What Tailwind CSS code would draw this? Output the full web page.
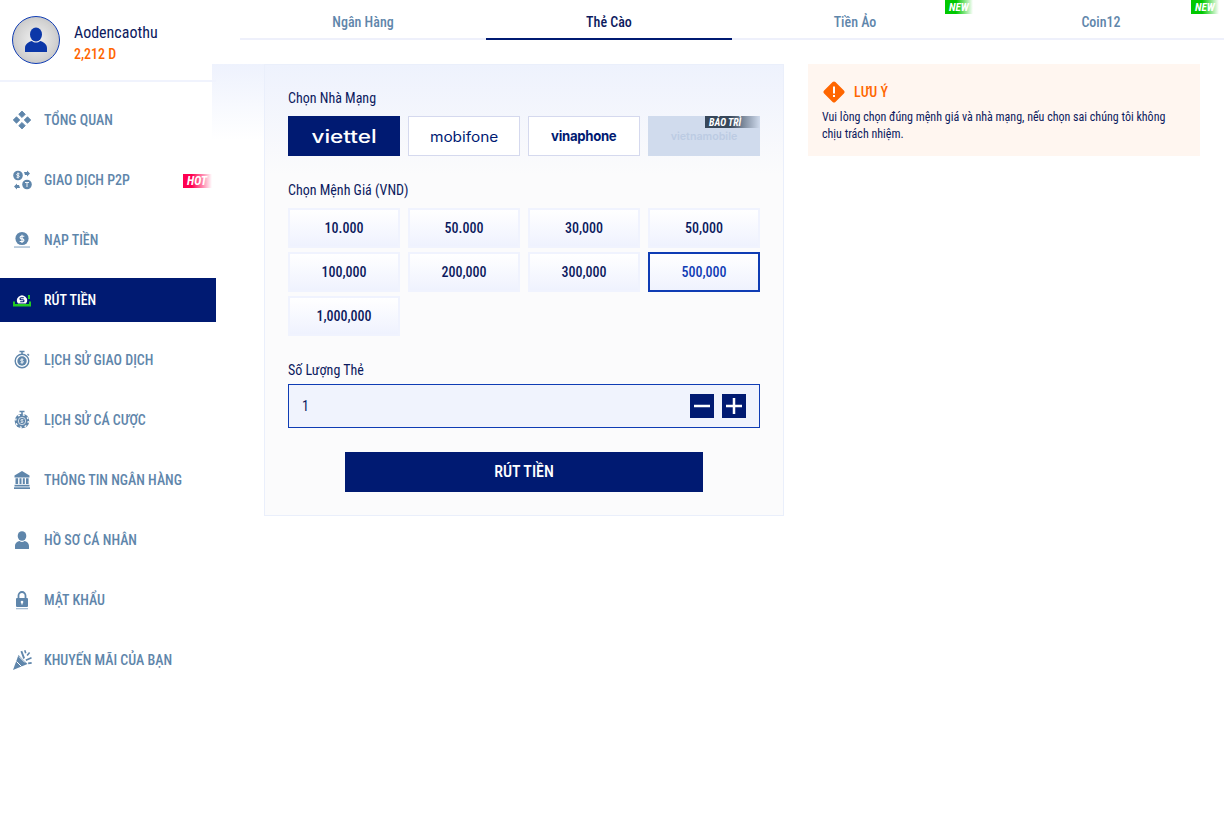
<!doctype html>
<html><head><meta charset="utf-8"><script src="https://cdn.jsdelivr.net/npm/@tailwindcss/browser@4"></script></head>
<body class="bg-white">
<div class="flex h-[820px] w-[1224px] overflow-hidden font-['Roboto','Liberation_Sans',sans-serif] [font-stretch:75%] text-[#0c1a5e]">

<aside class="relative z-10 w-[216px] shrink-0">
  <div class="flex h-[82px] items-start gap-[14px] border-b-2 border-[#f0f3fd] pl-3 pt-4">
    <div class="flex h-12 w-12 items-center justify-center rounded-full border border-[#0f3cb4] bg-[radial-gradient(circle,#f2f2f2_0%,#d2d2d2_60%,#b4b4b4_100%)]">
      <svg width="24" height="26" viewBox="0 0 24 26" fill="#0b37a8"><ellipse cx="12" cy="7.500" rx="6" ry="7"/><path d="M1 25v-4c0-4 4-6.500 7-7 2 2 6 2 8 0 3 .5 7 3 7 7v4z"/></svg>
    </div>
    <div class="pt-[5px]">
      <div class="text-[16px] leading-[24px]">Aodencaothu</div>
      <div class="text-[14px] font-medium leading-[19px] text-[#ff6600]">2,212 D</div>
    </div>
  </div>
  <nav class="flex flex-col gap-4 pt-4 text-[14px] font-medium text-[#5f86ab]">
    <a class="flex h-11 items-center gap-[10px] pl-[10px]"><svg class="h-6 w-6" viewBox="0 0 24 24" fill="#5f86ab" stroke="#5f86ab" stroke-width=".8" stroke-linejoin="round"><path d="M12 3l3.300 3.300L12 9.600 8.700 6.300zM6.500 8.700l3.300 3.300-3.300 3.300L3.200 12zM17.500 8.700l3.300 3.300-3.300 3.300-3.300-3.300zM12 14.400l3.300 3.300-3.300 3.300-3.300-3.300z"/></svg><span>TỔNG QUAN</span></a>
    <a class="relative flex h-11 items-center gap-[10px] pl-[10px]"><svg class="h-6 w-6" viewBox="0 0 24 24" fill="#5f86ab"><circle cx="8" cy="7.500" r="4.800"/><circle cx="17" cy="16.500" r="4.800"/><path d="M14 4l3 0 0-1.500 3 3-3 3 0-1.500-2 0zM10 20l-3 0 0 1.500-3-3 3-3 0 1.500 2 0z"/><path d="M8 4.500v6M9.500 5.800H7.300a1 1 0 0 0 0 1.700h1.400a1 1 0 0 1 0 1.700H6.500M15 14.500h4M17 14.500v4.500" fill="none" stroke="#fff" stroke-width=".9"/></svg><span>GIAO DỊCH P2P</span><span class="absolute right-1 top-[16px] flex h-[14px] w-[29px] items-center bg-[linear-gradient(90deg,#ff0050_30%,#ff005000_100%)] pl-1 text-[12px] font-bold italic leading-none text-white">HOT</span></a>
    <a class="flex h-11 items-center gap-[10px] pl-[10px]"><svg class="h-6 w-6" viewBox="0 0 24 24"><circle cx="12" cy="10.500" r="6.600" fill="#5f86ab"/><path d="M14.300 8.300H11a1.400 1.400 0 0 0 0 2.600h2a1.400 1.400 0 0 1 0 2.600H9.700M12 6.800v8.200" fill="none" stroke="#fff" stroke-width="1.100"/><rect x="4" y="18.300" width="16" height="1.500" fill="#a9bfd4"/></svg><span>NẠP TIỀN</span></a>
    <a class="flex h-11 items-center gap-[10px] bg-[#001a72] pl-[10px] text-white"><svg class="h-6 w-6" viewBox="0 0 24 24"><path d="M3 13.500h2V16h14v-2.500h2V18.500H3z" fill="#22cc22"/><path d="M8 15.500a5 5 0 1 1 8 0z" fill="#fff"/><path d="M13.800 9.800h-2.800a1 1 0 0 0 0 2h2a1 1 0 0 1 0 2h-2.800" fill="none" stroke="#001a72" stroke-width="1.100"/><rect x="18" y="7" width="2" height="4" fill="#22cc22"/></svg><span>RÚT TIỀN</span></a>
    <a class="flex h-11 items-center gap-[10px] pl-[10px]"><svg class="h-6 w-6" viewBox="0 0 24 24" fill="none"><circle cx="12" cy="13" r="6.800" stroke="#5f86ab" stroke-width="1.400"/><circle cx="12" cy="13" r="4.700" fill="#5f86ab"/><path d="M13.500 11.300H11.200a.9.900 0 0 0 0 1.700h1.600a.9.900 0 0 1 0 1.700h-2.300M12 10.200v5.600" stroke="#fff" stroke-width=".8"/><path d="M9.500 3.500h5M12 3.500v3M17.500 6l1.500 1.500" stroke="#5f86ab" stroke-width="1.500"/></svg><span>LỊCH SỬ GIAO DỊCH</span></a>
    <a class="flex h-11 items-center gap-[10px] pl-[10px]"><svg class="h-6 w-6" viewBox="0 0 24 24" fill="none"><circle cx="12" cy="13" r="7.300" fill="#5f86ab"/><circle cx="12" cy="13" r="6.300" stroke="#fff" stroke-width="1.300" stroke-dasharray="2 2.950"/><circle cx="12" cy="13" r="3.700" stroke="#fff" stroke-width=".7"/><path d="M13.300 11.600h-2a.8.800 0 0 0 0 1.400h1.400a.8.800 0 0 1 0 1.400h-2" stroke="#fff" stroke-width=".8"/><path d="M9.500 3.500h5M12 3.500v3" stroke="#5f86ab" stroke-width="1.500"/></svg><span>LỊCH SỬ CÁ CƯỢC</span></a>
    <a class="flex h-11 items-center gap-[10px] pl-[10px]"><svg class="h-6 w-6" viewBox="0 0 24 24" fill="#5f86ab"><path d="M12 3l7.500 4.500V9.500h-15V7.500z"/><path d="M5.500 10.300h2.600v5.700H5.500zM9.500 10.300h2v5.700h-2zM12.800 10.300h2v5.700h-2zM16 10.300h2.600v5.700H16z"/><rect x="4.500" y="16.800" width="15" height="1.700"/><rect x="4" y="19.300" width="16" height="1.700"/></svg><span>THÔNG TIN NGÂN HÀNG</span></a>
    <a class="flex h-11 items-center gap-[10px] pl-[10px]"><svg class="h-6 w-6" viewBox="0 0 24 24" fill="#5f86ab"><ellipse cx="12" cy="8" rx="4.300" ry="4.800"/><path d="M5 20.500v-2.500c0-3 2.500-4.500 4.500-5 1.500 1.200 3.500 1.200 5 0 2 .5 4.500 2 4.500 5v2.500a.5.500 0 0 1-.5.500h-13a.5.500 0 0 1-.5-.5z"/></svg><span>HỒ SƠ CÁ NHÂN</span></a>
    <a class="flex h-11 items-center gap-[10px] pl-[10px]"><svg class="h-6 w-6" viewBox="0 0 24 24" fill="none"><rect x="6" y="10" width="12" height="9" rx="1" fill="#5f86ab"/><path d="M8.500 10V7.500a3.500 3.500 0 0 1 7 0V10" stroke="#5f86ab" stroke-width="1.800"/><circle cx="12" cy="14" r="1.300" fill="#fff"/><rect x="11.400" y="14" width="1.200" height="2.500" fill="#fff"/><rect x="6" y="20" width="12" height="1.300" fill="#a9bfd4"/></svg><span>MẬT KHẨU</span></a>
    <a class="flex h-11 items-center gap-[10px] pl-[10px]"><svg class="h-6 w-6" viewBox="0 0 24 24" fill="#5f86ab"><path d="M3 22l5.500-15 9 9z"/><path d="M6.500 13.500l5 5M9 8.500l6 6" stroke="#fff" stroke-width="1" fill="none"/><path d="M10.500 3.500l1.700-.7 2.800 7.200-1.700.9zM14 2.500l1.500-.5 1 3-1.500.5zM16.500 7l2.500-3 1.200 1-2.500 3zM15.500 11.500l5.700-2.500.6 1.600-5.600 2.400zM18 14.500l3.500-.5.300 1.700-3.500.5z"/></svg><span>KHUYẾN MÃI CỦA BẠN</span></a>
  </nav>
</aside>

<main class="-ml-1 w-[1012px] shrink-0">
  <div class="ml-7 flex h-10 border-b-2 border-[#eef0fb] text-[14px] font-medium text-[#5f86ab]">
    <a class="flex h-10 w-[246px] items-center justify-center pt-1">Ngân Hàng</a>
    <a class="flex h-10 w-[246px] items-center justify-center border-b-2 border-[#001a72] pt-[6px] text-[#0c1a5e]">Thẻ Cào</a>
    <a class="relative flex h-10 w-[246px] items-center justify-center pt-1">Tiền Ảo<span class="absolute right-[5px] top-0 flex h-[14px] w-[28px] items-center bg-[linear-gradient(90deg,#00c800_40%,#00c80000_100%)] pl-1 text-[11px] font-bold italic leading-none text-white">NEW</span></a>
    <a class="relative flex h-10 w-[246px] items-center justify-center pt-1">Coin12<span class="absolute right-[5px] top-0 flex h-[14px] w-[28px] items-center bg-[linear-gradient(90deg,#00c800_40%,#00c80000_100%)] pl-1 text-[11px] font-bold italic leading-none text-white">NEW</span></a>
  </div>

  <div class="flex items-start pt-6">
    <div class="h-[76px] w-[52px] shrink-0 bg-[linear-gradient(180deg,#eef2fd_0%,#ffffff_100%)]"></div>
    <section class="w-[520px] border border-[#eaeffb] bg-[linear-gradient(180deg,#eef2fd_0px,#fbfbfc_110px)] px-[23px] pb-[23px] pt-[23px] text-[14px]">
      <div class="mb-2 leading-5">Chọn Nhà Mạng</div>
      <div class="grid grid-cols-4 gap-2 font-['Inter',sans-serif] [font-stretch:100%]">
        <div class="flex h-10 items-center justify-center bg-[#001a72] text-[18px] font-medium text-white"><span class="inline-block scale-x-[1.25]">viettel</span></div>
        <div class="flex h-10 items-center justify-center border border-[#d5d9ee] bg-white text-[14px] font-normal text-[#001a72]"><span class="inline-block scale-x-[1.1]">mobifone</span></div>
        <div class="flex h-10 items-center justify-center border border-[#d5d9ee] bg-white pb-[2px] text-[14px] font-bold tracking-[-0.3px] text-[#001a72]"><span class="inline-block scale-x-[.94]">vinaphone</span></div>
        <div class="relative flex h-10 items-center justify-center bg-[#d0dbed] pt-[2px] text-[10.700px] font-semibold text-[#bccbe3]">vietnamobile<span class="absolute right-0 top-0 flex h-3 w-[55px] items-center bg-[linear-gradient(90deg,#37475a_45%,#37475a00_100%)] pl-1 pt-px font-['Roboto',sans-serif] text-[10px] font-bold italic leading-none text-white [font-stretch:75%]">BẢO TRÌ</span></div>
      </div>

      <div class="mb-2 mt-6 leading-5">Chọn Mệnh Giá (VND)</div>
      <div class="grid grid-cols-4 gap-x-2 gap-y-1 font-medium">
        <div class="flex h-10 items-center justify-center border-2 border-[#f0f3fe] bg-[linear-gradient(180deg,#ffffff,#eff2fe)]">10.000</div>
        <div class="flex h-10 items-center justify-center border-2 border-[#f0f3fe] bg-[linear-gradient(180deg,#ffffff,#eff2fe)]">50.000</div>
        <div class="flex h-10 items-center justify-center border-2 border-[#f0f3fe] bg-[linear-gradient(180deg,#ffffff,#eff2fe)]">30,000</div>
        <div class="flex h-10 items-center justify-center border-2 border-[#f0f3fe] bg-[linear-gradient(180deg,#ffffff,#eff2fe)]">50,000</div>
        <div class="flex h-10 items-center justify-center border-2 border-[#f0f3fe] bg-[linear-gradient(180deg,#ffffff,#eff2fe)]">100,000</div>
        <div class="flex h-10 items-center justify-center border-2 border-[#f0f3fe] bg-[linear-gradient(180deg,#ffffff,#eff2fe)]">200,000</div>
        <div class="flex h-10 items-center justify-center border-2 border-[#f0f3fe] bg-[linear-gradient(180deg,#ffffff,#eff2fe)]">300,000</div>
        <div class="flex h-10 items-center justify-center border-2 border-[#0f3cb4] bg-[linear-gradient(180deg,#ffffff,#eff2fe)] text-[#0f3cb4]">500,000</div>
        <div class="flex h-10 items-center justify-center border-2 border-[#f0f3fe] bg-[linear-gradient(180deg,#ffffff,#eff2fe)]">1,000,000</div>
      </div>

      <div class="mb-1 mt-6 leading-5">Số Lượng Thẻ</div>
      <div class="flex h-11 items-center justify-between border border-[#0f3cb4] bg-[#f0f3fd] pl-[13px] pr-[13px]">
        <span>1</span>
        <div class="flex gap-2">
          <button class="flex h-6 w-6 items-center justify-center bg-[#001a72]"><svg width="16" height="16" viewBox="0 0 16 16"><rect y="6.750" width="16" height="2.500" fill="#fff"/></svg></button>
          <button class="flex h-6 w-6 items-center justify-center bg-[#001a72]"><svg width="16" height="16" viewBox="0 0 16 16"><path d="M0 6.750h16v2.500H0zM6.750 0h2.500v16h-2.500z" fill="#fff"/></svg></button>
        </div>
      </div>
      <button class="mx-auto mt-6 flex h-10 w-[358px] items-center justify-center bg-[#001a72] text-[16px] font-medium text-white">RÚT TIỀN</button>
    </section>

    <aside class="ml-6 h-[92px] w-[392px] bg-[#fff6f0] pl-[14px] pr-4 pt-[17px]">
      <div class="flex h-[22px] items-center gap-[9px] pl-px text-[14px] font-medium text-[#ff6600]">
        <svg width="22" height="22" viewBox="0 0 22 22"><path d="M11 .5a2 2 0 0 1 1.400.6l8.500 8.500a2 2 0 0 1 0 2.800l-8.500 8.500a2 2 0 0 1-2.800 0L1.100 12.400a2 2 0 0 1 0-2.800L9.600 1.100A2 2 0 0 1 11 .5z" fill="#ff6600"/><rect x="10" y="5.500" width="2" height="7" fill="#fff"/><rect x="10" y="14" width="2" height="2" fill="#fff"/></svg>
        <span>LƯU Ý</span>
      </div>
      <p class="mt-[6px] text-[12px] leading-[17px]">Vui lòng chọn đúng mệnh giá và nhà mạng, nếu chọn sai chúng tôi không chịu trách nhiệm.</p>
    </aside>
  </div>
</main>
</div>
</body></html>
